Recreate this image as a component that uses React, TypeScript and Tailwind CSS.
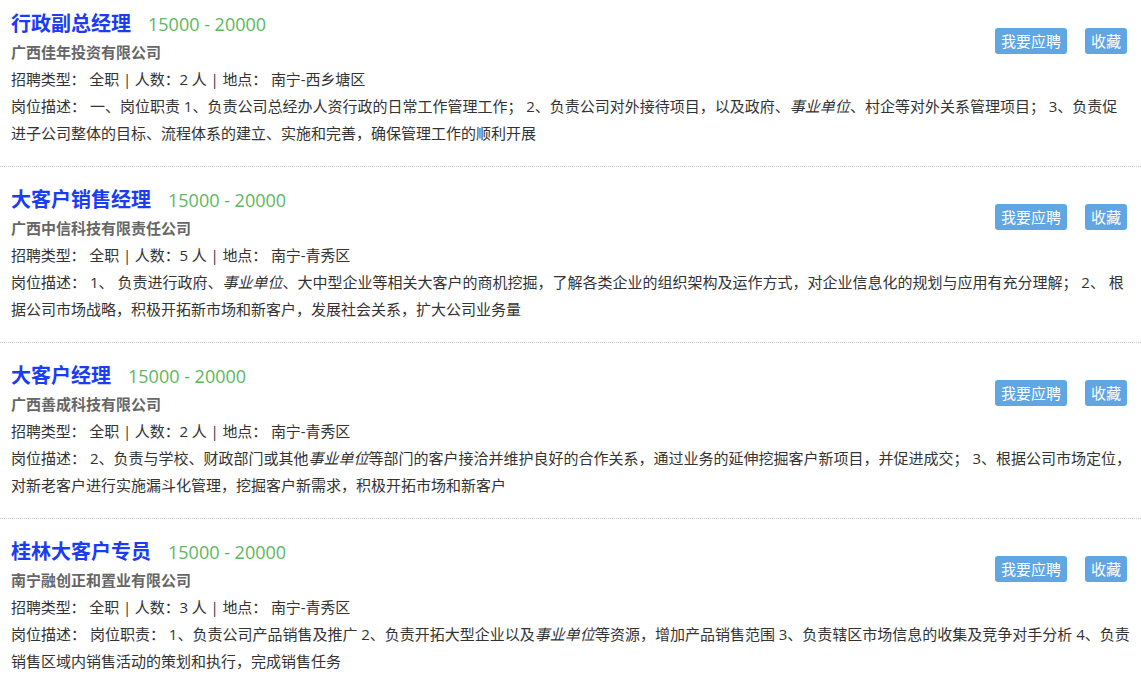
import React from "react";

type Job = {
  title: string;
  company: string;
  count: number;
  location: string;
  descClass: string;
  desc: React.ReactNode;
};

const Em = ({ children }: { children: React.ReactNode }) => (
  <em className="italic">{children}</em>
);

const jobs: Job[] = [
  {
    title: "行政副总经理",
    company: "广西佳年投资有限公司",
    count: 2,
    location: "南宁-西乡塘区",
    descClass: "pr-[8px]",
    desc: (
      <>
        一、岗位职责 1、负责公司总经办人资行政的日常工作管理工作； 2、负责公司对外接待项目，以及政府、<Em>事业单位</Em>、村企等对外关系管理项目； 3、负责促进子公司整体的目标、流程体系的建立、实施和完善，确保管理工作的顺利开展
      </>
    ),
  },
  {
    title: "大客户销售经理",
    company: "广西中信科技有限责任公司",
    count: 5,
    location: "南宁-青秀区",
    descClass: "",
    desc: (
      <>
        1、 负责进行政府、<Em>事业单位</Em>、大中型企业等相关大客户的商机挖掘，了解各类企业的组织架构及运作方式，对企业信息化的规划与应用有充分理解； 2、 根据公司市场战略，积极开拓新市场和新客户，发展社会关系，扩大公司业务量
      </>
    ),
  },
  {
    title: "大客户经理",
    company: "广西善成科技有限公司",
    count: 2,
    location: "南宁-青秀区",
    descClass: "",
    desc: (
      <>
        2、负责与学校、财政部门或其他<Em>事业单位</Em>等部门的客户接洽并维护良好的合作关系，通过业务的延伸挖掘客户新项目，并促进成交； 3、根据公司市场定位，对新老客户进行实施漏斗化管理，挖掘客户新需求，积极开拓市场和新客户
      </>
    ),
  },
  {
    title: "桂林大客户专员",
    company: "南宁融创正和置业有限公司",
    count: 3,
    location: "南宁-青秀区",
    descClass: "",
    desc: (
      <>
        岗位职责： 1、负责公司产品销售及推广 2、负责开拓大型企业以及<Em>事业单位</Em>等资源，增加产品销售范围 3、负责辖区市场信息的收集及竞争对手分析 4、负责销售区域内销售活动的策划和执行，完成销售任务
      </>
    ),
  },
];

function JobItem({ job }: { job: Job }) {
  return (
    <div className="border-b border-dotted border-[#cccccc] pl-[11px] pr-[8px] pt-[18px] pb-[19px] text-[15px] leading-[27px] text-[#333333]">
      <div className="float-right mt-[19px] mr-[6px] flex gap-[18px]">
        <button className="h-[26px] rounded-[3px] bg-[#5fa6e3] px-[6px] text-[15px] leading-[26px] text-white">
          我要应聘
        </button>
        <button className="h-[26px] rounded-[3px] bg-[#5fa6e3] px-[6px] text-[15px] leading-[26px] text-white">
          收藏
        </button>
      </div>
      <div className="flex items-baseline leading-[30px]">
        <span className="text-[20px] font-bold text-[#1a3cf4]">{job.title}</span>
        <span className="ml-[17px] text-[18px] text-[#5cb85c]">15000 - 20000</span>
      </div>
      <div className="font-bold text-[#666666]">{job.company}</div>
      <div className="tracking-[-0.1px]">
        招聘类型： 全职 | 人数：{job.count} 人 | 地点： {job.location}
      </div>
      <div className={job.descClass}>岗位描述： {job.desc}</div>
    </div>
  );
}

export default function App() {
  return (
    <div
      className="h-[676px] w-full overflow-hidden bg-white"
      style={{ fontFamily: '"Open Sans", "Noto Sans CJK SC", sans-serif' }}
    >
      <div className="-mt-[9px]">
        {jobs.map((j, i) => (
          <JobItem key={i} job={j} />
        ))}
      </div>
    </div>
  );
}
